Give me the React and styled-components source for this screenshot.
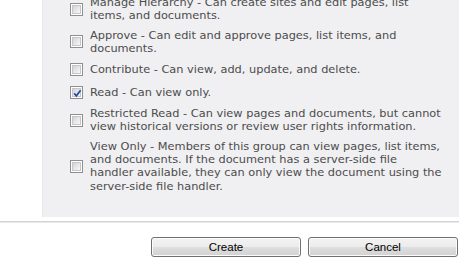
import React from 'react'
import styled, { createGlobalStyle } from 'styled-components'

const GlobalStyle = createGlobalStyle`
    html, body {
        margin: 0;
        padding: 0;
        background: #ffffff;
        overflow: hidden;
    }
`

const Page = styled.div`
    width: 459px;
    height: 259px;
    display: flex;
    flex-direction: column;
    font-family: "DejaVu Sans", Verdana, sans-serif;
`

const Section = styled.div`
    display: flex;
`

const Gutter = styled.div`
    width: 42px;
    flex-shrink: 0;
`

const Panel = styled.div`
    flex: 1;
    background: #f0f0f2;
    border-left: 1px solid #e7e7ea;
    padding: 0 0 24px 27px;
    height: 217px;
    box-sizing: border-box;
    overflow: hidden;
`

const List = styled.div`
    display: flex;
    flex-direction: column;
    gap: 6px;
    margin-top: -4px;
`

const Row = styled.div`
    display: flex;
    align-items: center;
    gap: 7px;
`

const Box = styled.span`
    width: 13px;
    height: 13px;
    margin: 2px 0;
    flex-shrink: 0;
    box-sizing: border-box;
    border: 1px solid #8e8f8f;
    background: #ffffff;
    padding: 1px;
    display: flex;
    position: relative;
`

const BoxInner = styled.span`
    flex: 1;
    background: linear-gradient(135deg, #d2d2d4 0%, #e8e8ea 55%, #f7f7f8 100%);
    border: 1px solid #c6c6c8;
`

const Tick = styled.svg`
    position: absolute;
    left: 0;
    top: 0;
`

const Label = styled.div`
    font-size: 11.35px;
    line-height: 13.3px;
    color: #4c4c4c;
    white-space: nowrap;
`

const Divider = styled.div`
    margin-top: 4px;
    height: 1px;
    background: #d3d3d3;
    border-bottom: 1px solid #e9e9e9;
`

const Buttons = styled.div`
    display: flex;
    justify-content: flex-end;
    gap: 7px;
    padding-right: 1px;
    margin-top: 14px;
`

const Button = styled.button`
    width: 150px;
    height: 20px;
    box-sizing: border-box;
    border: 1px solid #707070;
    border-radius: 3px;
    background: linear-gradient(to bottom, #f3f3f3 0%, #ececec 48%, #dedede 52%, #d2d2d2 100%);
    box-shadow: inset 0 0 0 1px #fbfbfb;
    font-family: "Liberation Sans", Tahoma, sans-serif;
    font-size: 11.5px;
    color: #000000;
    padding: 0;
`

const levels = [
    { lines: ['Manage Hierarchy - Can create sites and edit pages, list', 'items, and documents.'] },
    { lines: ['Approve - Can edit and approve pages, list items, and', 'documents.'] },
    { lines: ['Contribute - Can view, add, update, and delete.'] },
    { lines: ['Read - Can view only.'], checked: true },
    { lines: ['Restricted Read - Can view pages and documents, but cannot', 'view historical versions or review user rights information.'] },
    {
        lines: [
            'View Only - Members of this group can view pages, list items,',
            'and documents. If the document has a server-side file',
            'handler available, they can only view the document using the',
            'server-side file handler.',
        ],
    },
]

const Checkbox = ({ checked }) => (
    <Box>
        <BoxInner />
        {checked && (
            <Tick width="13" height="13" viewBox="0 0 13 13">
                <path d="M3.2 6.4 L5.4 8.8 L9.6 3.2" fill="none" stroke="#2b4d9c" strokeWidth="1.8" />
            </Tick>
        )}
    </Box>
)

const App = () => {
    return (
        <Page>
            <GlobalStyle />
            <Section>
                <Gutter />
                <Panel>
                    <List>
                        {levels.map((level, i) => (
                            <Row key={i}>
                                <Checkbox checked={level.checked} />
                                <Label>
                                    {level.lines.map((line, j) => (
                                        <div key={j}>{line}</div>
                                    ))}
                                </Label>
                            </Row>
                        ))}
                    </List>
                </Panel>
            </Section>
            <Divider />
            <Buttons>
                <Button>Create</Button>
                <Button>Cancel</Button>
            </Buttons>
        </Page>
    )
}

export default App
